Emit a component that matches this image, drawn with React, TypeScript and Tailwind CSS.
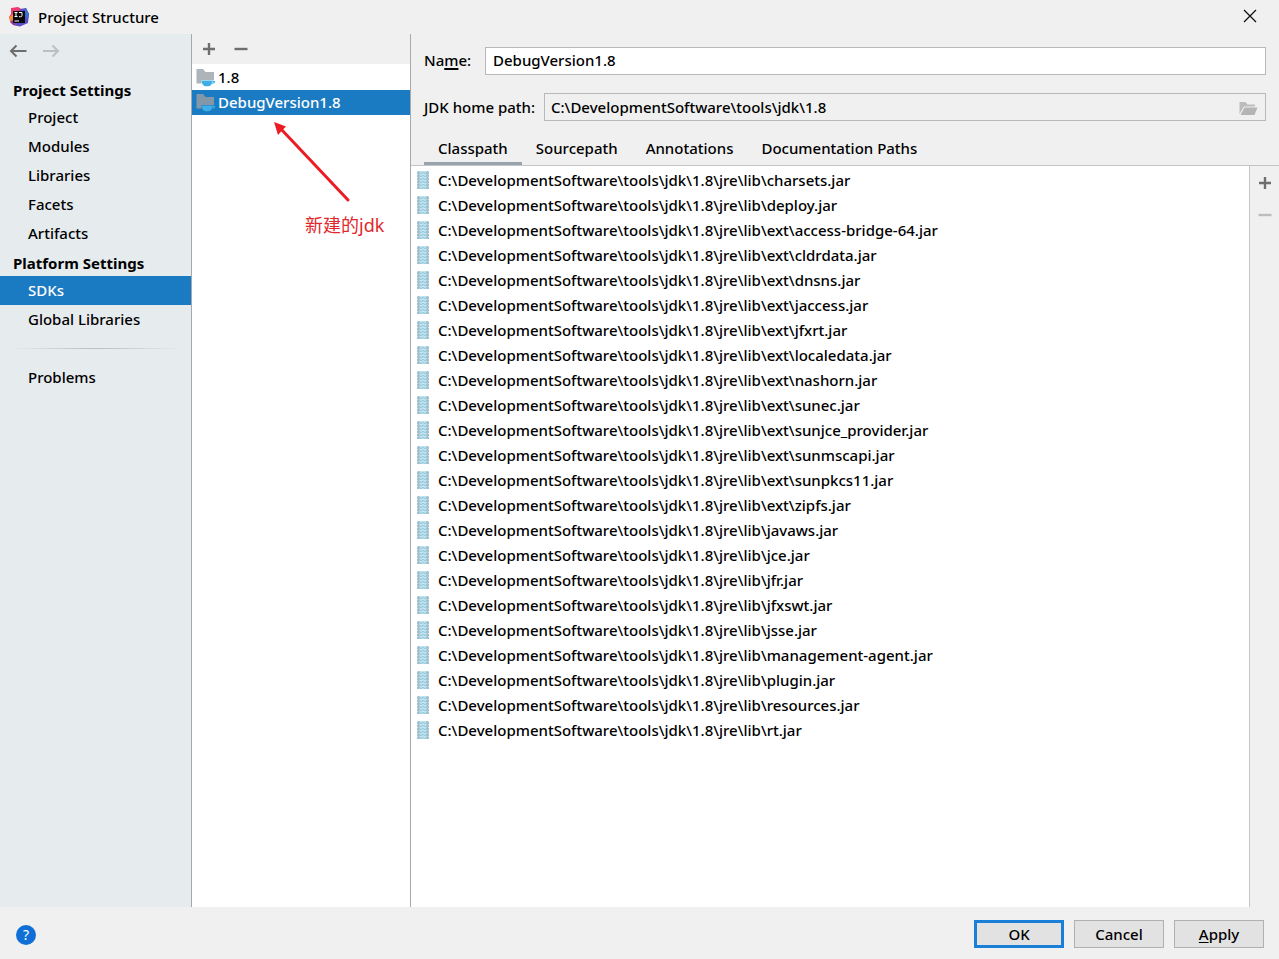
import React, { useState } from "react";

const JDK_HOME = "C:\\DevelopmentSoftware\\tools\\jdk\\1.8";

const JARS = [
  "charsets.jar",
  "deploy.jar",
  "ext\\access-bridge-64.jar",
  "ext\\cldrdata.jar",
  "ext\\dnsns.jar",
  "ext\\jaccess.jar",
  "ext\\jfxrt.jar",
  "ext\\localedata.jar",
  "ext\\nashorn.jar",
  "ext\\sunec.jar",
  "ext\\sunjce_provider.jar",
  "ext\\sunmscapi.jar",
  "ext\\sunpkcs11.jar",
  "ext\\zipfs.jar",
  "javaws.jar",
  "jce.jar",
  "jfr.jar",
  "jfxswt.jar",
  "jsse.jar",
  "management-agent.jar",
  "plugin.jar",
  "resources.jar",
  "rt.jar",
];

function IdeaLogo() {
  return (
    <svg width="20" height="20" viewBox="0 0 20 20" aria-hidden="true">
      <path d="M2 1 9 0 14 3 10 11 1 12 0 10 2 7Z" fill="#ee3a6c" />
      <path d="M0 10 4 7 6 17 1 15Z" fill="#f5893c" />
      <path d="M11 2 17 1 20 7 19 16 11 19.500 4 18 8 10Z" fill="#5a4fc4" />
      <path d="M17 1 20 7 19 12 15 8Z" fill="#3b6fd0" />
      <path d="M1 15 5 12 8 18.500 4 18Z" fill="#8e3ba8" />
      <rect x="4" y="4" width="12" height="12" fill="#0b0b0e" />
      <path d="M5.500 5.500h3M7 5.500v4M5.500 9.500h3M10 5.500h3v3q0 1.200-1.500 1.200H10" fill="none" stroke="#fff" strokeWidth="1" />
      <path d="M5.500 14h4.500" stroke="#fff" strokeWidth="1" />
    </svg>
  );
}

function Arrow({ back }: { back?: boolean }) {
  return (
    <svg width="18" height="14" viewBox="0 0 18 14" fill="none" stroke={back ? "#6e6e6e" : "#bcc0c3"} strokeWidth="2" aria-hidden="true">
      {back ? <path d="M17.500 7H2M7.500 1.500 2 7l5.500 5.500" /> : <path d="M1 7h15M10.500 1.500 16 7l-5.500 5.500" />}
    </svg>
  );
}

function Plus() {
  return (
    <svg width="14" height="14" viewBox="0 0 14 14" aria-hidden="true">
      <path d="M1 7h12M7 1v12" stroke="#6e6e6e" strokeWidth="2.400" />
    </svg>
  );
}

function Minus({ disabled }: { disabled?: boolean }) {
  return (
    <svg width="14" height="14" viewBox="0 0 14 14" aria-hidden="true">
      <path d="M0.500 7h13" stroke={disabled ? "#bdbdbd" : "#6e6e6e"} strokeWidth="2.400" />
    </svg>
  );
}

function SdkIcon({ selected }: { selected?: boolean }) {
  return (
    <svg width="20" height="18" viewBox="0 0 20 18" className="mt-0.5" aria-hidden="true">
      <path d="M0.500 0h6.500l2.500 3h8.500v8H5.500v3.500h-5Z" fill={selected ? "#8298a8" : "#adb4ba"} />
      <path d="M5.500 11.500h10.500q3.500 0 3.200 1.500T15.800 14.800q-1 2.500-3.800 2.500h-2.500Q6 16.800 5.500 11.500Z" fill="#40aee6" />
      <path d="M15.800 12.700h1.800q.3 1-1.700 1Z" fill={selected ? "#1b7bc2" : "#e8f5fc"} />
    </svg>
  );
}

function JarIcon() {
  return (
    <svg width="14" height="18" viewBox="0 0 14 18" aria-hidden="true">
      <path d="M1 0h12v18H1Z" fill="#c3e4ef" />
      <path d="M1 0h2.500v18H1ZM10.500 0H13v18h-2.500Z" fill="#a3bfcb" />
      <path
        d="M3 1.500l2 1 2-1 2 1 2-1M3 4.500l2 1 2-1 2 1 2-1M3 7.500l2 1 2-1 2 1 2-1M3 10.500l2 1 2-1 2 1 2-1M3 13.500l2 1 2-1 2 1 2-1M3 16.500l2 1 2-1 2 1 2-1"
        fill="none"
        stroke="#8cc4d9"
        strokeWidth="1"
      />
      <path d="M1.500 0v18M12.500 0v18" stroke="#d9e6ec" strokeDasharray="1 2" />
    </svg>
  );
}

function OpenFolder() {
  return (
    <svg width="19" height="15" viewBox="0 0 19 15" aria-hidden="true">
      <path d="M0.500 13V1h6l2 2.500h7.500V5.500H5L0.500 13Z" fill="#bcbcbc" />
      <path d="M5.500 6.500H18.500L15.500 14H1.500Z" fill="#b4b4b4" />
    </svg>
  );
}

function NavItem({ label, active, onPick }: { label: string; active: boolean; onPick: (s: string) => void }) {
  return (
    <button
      type="button"
      onClick={() => onPick(label)}
      className={`flex w-full items-center pt-1 pb-[5px] pl-7 text-left ${active ? "bg-[#1b7bc2] text-white" : ""}`}
    >
      {label}
    </button>
  );
}

function NavGroup({ title, items, active, onPick }: { title: string; items: string[]; active: string; onPick: (s: string) => void }) {
  return (
    <section>
      <h2 className="flex h-7 items-center pt-0.5 pl-[13px] font-bold">{title}</h2>
      <ul>
        {items.map((item) => (
          <li key={item}>
            <NavItem label={item} active={item === active} onPick={onPick} />
          </li>
        ))}
      </ul>
    </section>
  );
}

export default function App() {
  const [page, setPage] = useState("SDKs");
  const [sdk, setSdk] = useState("DebugVersion1.8");
  const [name, setName] = useState("DebugVersion1.8");
  const [tab, setTab] = useState("Classpath");

  return (
    <div className="flex min-h-screen flex-col bg-[#f0f0f0] font-['Noto_Sans','Noto_Sans_CJK_SC',sans-serif] text-[15px] leading-5 font-medium text-black">
      <header className="flex h-[34px] items-center justify-between pr-[22px] pl-[9px]">
        <div className="flex items-center gap-[9px]">
          <IdeaLogo />
          <h1>Project Structure</h1>
        </div>
        <button type="button" aria-label="Close" className="mb-0.5">
          <svg width="14" height="14" viewBox="0 0 14 14" aria-hidden="true">
            <path d="M1 1l12 12M13 1 1 13" stroke="#111" strokeWidth="1.300" />
          </svg>
        </button>
      </header>

      <div className="flex grow">
        <nav className="w-48 shrink-0 border-r border-[#a3a9ad] bg-[#e6ebee]">
          <div className="flex h-[41px] items-start gap-[15px] pt-2.5 pl-[9px]">
            <button type="button" aria-label="Back" className="flex">
              <Arrow back />
            </button>
            <button type="button" aria-label="Forward" disabled className="flex">
              <Arrow />
            </button>
          </div>
          <NavGroup
            title="Project Settings"
            items={["Project", "Modules", "Libraries", "Facets", "Artifacts"]}
            active={page}
            onPick={setPage}
          />
          <NavGroup title="Platform Settings" items={["SDKs", "Global Libraries"]} active={page} onPick={setPage} />
          <div className="mx-2 my-3.5 h-px bg-linear-to-r from-transparent via-[#b8bec2] to-transparent" />
          <NavItem label="Problems" active={page === "Problems"} onPick={setPage} />
        </nav>

        <section className="relative flex w-[219px] shrink-0 flex-col border-r border-[#a9a9a9]">
          <div className="flex h-[30px] items-center gap-[18px] pl-2.5">
            <button type="button" aria-label="Add SDK">
              <Plus />
            </button>
            <button type="button" aria-label="Remove SDK">
              <Minus />
            </button>
          </div>
          <ul className="grow bg-white pt-px">
            {["1.8", "DebugVersion1.8"].map((s) => (
              <li key={s}>
                <button
                  type="button"
                  onClick={() => setSdk(s)}
                  className={`flex w-full items-center gap-0.5 pt-0.5 pb-[3px] pl-1 text-left ${s === sdk ? "bg-[#1b7bc2] text-white" : ""}`}
                >
                  <SdkIcon selected={s === sdk} />
                  {s}
                </button>
              </li>
            ))}
          </ul>
          <div className="pointer-events-none absolute top-[87px] left-[81px] text-[#ec1c24]">
            <svg width="80" height="82" viewBox="0 0 80 82" aria-hidden="true">
              <path d="M8 8 75 79" stroke="currentColor" strokeWidth="3" strokeLinecap="round" />
              <path d="M1 1 13 5.500 9.500 9 5 14Z" fill="currentColor" />
            </svg>
          </div>
          <p className="pointer-events-none absolute top-[179px] left-[113px] text-lg leading-6 font-normal text-[#e0282c]">新建的jdk</p>
        </section>

        <main className="flex min-w-0 grow flex-col">
          <div className="flex items-center pt-[13px] pr-[13px] pl-[13px]">
            <label htmlFor="sdk-name" className="w-[61px] shrink-0 pb-0.5">
              Na<span className="underline decoration-2 underline-offset-2">m</span>e:
            </label>
            <input
              id="sdk-name"
              value={name}
              onChange={(e) => setName(e.target.value)}
              className="h-7 min-w-0 grow border border-[#b9b9b9] bg-white px-[7px] pb-0.5 outline-none"
            />
          </div>
          <div className="flex items-center pt-[18px] pr-[13px] pl-[13px]">
            <label htmlFor="jdk-home" className="w-[120px] shrink-0 whitespace-nowrap">
              JDK home path:
            </label>
            <div className="flex h-7 min-w-0 grow items-center border border-[#b9b9b9] pr-[7px] pl-1.5">
              <input id="jdk-home" readOnly value={JDK_HOME} className="min-w-0 grow bg-transparent outline-none" />
              <button type="button" aria-label="Browse" className="mt-0.5">
                <OpenFolder />
              </button>
            </div>
          </div>

          <div role="tablist" className="mt-[11px] flex h-[34px] border-b border-[#c4c4c4] pl-[13px]">
            {["Classpath", "Sourcepath", "Annotations", "Documentation Paths"].map((t) => (
              <button
                key={t}
                type="button"
                role="tab"
                aria-selected={t === tab}
                onClick={() => setTab(t)}
                className={`border-b-3 px-3.5 pt-0.5 ${t === tab ? "border-[#99a3ad]" : "border-transparent"}`}
              >
                {t}
              </button>
            ))}
          </div>

          <div className="flex grow">
            <ul className="min-w-0 grow border-r border-[#c4c4c4] bg-white pt-px">
              {JARS.map((jar) => (
                <li key={jar} className="flex h-[25px] items-center gap-2 pl-[5px]">
                  <JarIcon />
                  {`${JDK_HOME}\\jre\\lib\\${jar}`}
                </li>
              ))}
            </ul>
            <div className="flex w-[29px] shrink-0 flex-col items-center gap-[18px] pt-2.5">
              <button type="button" aria-label="Add path" className="flex">
                <Plus />
              </button>
              <button type="button" aria-label="Remove path" disabled className="flex">
                <Minus disabled />
              </button>
            </div>
          </div>
        </main>
      </div>

      <footer className="flex h-[52px] items-center justify-between pr-[15px] pl-4">
        <button type="button" aria-label="Help" className="mt-1 flex size-5 items-center justify-center rounded-full bg-[#0f6fd6] text-sm font-normal text-white">
          ?
        </button>
        <div className="mt-px flex gap-2.5">
          <button type="button" className="h-7 w-[90px] border-3 border-[#1a7fd6] bg-[#e2e2e2]">
            OK
          </button>
          <button type="button" className="h-7 w-[90px] border border-[#b0b0b0] bg-[#e2e2e2]">
            Cancel
          </button>
          <button type="button" className="h-7 w-[90px] border border-[#b0b0b0] bg-[#e2e2e2]">
            <span className="underline underline-offset-2">A</span>pply
          </button>
        </div>
      </footer>
    </div>
  );
}
